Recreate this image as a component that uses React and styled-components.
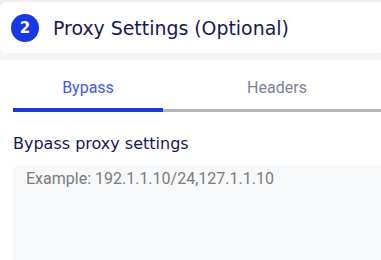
import React from 'react'
import styled, {createGlobalStyle} from 'styled-components'

// -------------------------------------------------------------
// Constants.
// -------------------------------------------------------------

const colors = {
  brand: '#1638e6',
  tab: '#3d5af1',
  muted: '#7d8197',
  navy: '#16175a',
  page: '#f4f5f7',
  field: '#f7f8fa',
}

const HEADING_FONT = `"DejaVu Sans", "Noto Sans", sans-serif`
const BODY_FONT = `Roboto, "Liberation Sans", sans-serif`

const GlobalStyle = createGlobalStyle`
  html, body {
    margin: 0;
    padding: 0;
    background: white;
    overflow: hidden;
  }
`

// -------------------------------------------------------------
// Step header.
// -------------------------------------------------------------

const Top = styled.div`
  padding: 2px 0 7px;
  background: linear-gradient(#eceef1, ${colors.page});
`

const StepCard = styled.header`
  display: flex;
  align-items: center;
  gap: 14px;

  height: 51px;
  padding-left: 11px;

  background: white;
  border-radius: 6px 0 0 6px;
`

const StepNumber = styled.span`
  display: flex;
  align-items: center;
  justify-content: center;

  width: 28px;
  height: 28px;
  border-radius: 50%;

  color: white;
  background: ${colors.brand};

  font-family: ${HEADING_FONT};
  font-size: 15px;
  font-weight: bold;
`

const StepTitle = styled.h2`
  margin: 0;

  color: ${colors.navy};
  font-family: ${HEADING_FONT};
  font-size: 18.9px;
  font-weight: normal;
  white-space: nowrap;
`

// -------------------------------------------------------------
// Tabs.
// -------------------------------------------------------------

const Body = styled.section`
  width: 381px;
  padding-left: 13px;
  box-sizing: border-box;
  overflow: hidden;
`

const TabList = styled.div`
  display: grid;
  grid-template-columns: 150px 228px;
  width: 378px;
`

const Tab = styled.div`
  height: 52px;
  padding-top: 6px;
  box-sizing: border-box;

  display: flex;
  align-items: center;
  justify-content: center;

  color: ${p => (p.active ? colors.tab : colors.muted)};
  font-family: ${BODY_FONT};
  font-size: 16px;

  border-bottom: 3px solid #b5b5b5;
  ${p => p.active && `border-bottom: 4px solid ${colors.brand};`}
`

// -------------------------------------------------------------
// Field.
// -------------------------------------------------------------

const Label = styled.label`
  display: block;
  margin: 22px 0 12px;

  color: ${colors.navy};
  font-family: ${HEADING_FONT};
  font-size: 16px;
  white-space: nowrap;
`

const TextArea = styled.textarea`
  display: block;
  box-sizing: border-box;
  width: 100%;
  height: 95px;
  padding: 4px 13px;

  border: none;
  border-radius: 6px 0 0 0;
  outline: none;
  resize: none;

  background: ${colors.field};
  font-family: ${BODY_FONT};
  font-size: 16px;

  &::placeholder {
    color: #7b7b7b;
  }
`

export default function App() {
  return (
    <>
      <GlobalStyle />
      <Top>
        <StepCard>
          <StepNumber>2</StepNumber>
          <StepTitle>Proxy Settings (Optional)</StepTitle>
        </StepCard>
      </Top>
      <Body>
        <TabList>
          <Tab active>Bypass</Tab>
          <Tab>Headers</Tab>
        </TabList>
        <Label>Bypass proxy settings</Label>
        <TextArea placeholder="Example: 192.1.1.10/24,127.1.1.10" />
      </Body>
    </>
  )
}
